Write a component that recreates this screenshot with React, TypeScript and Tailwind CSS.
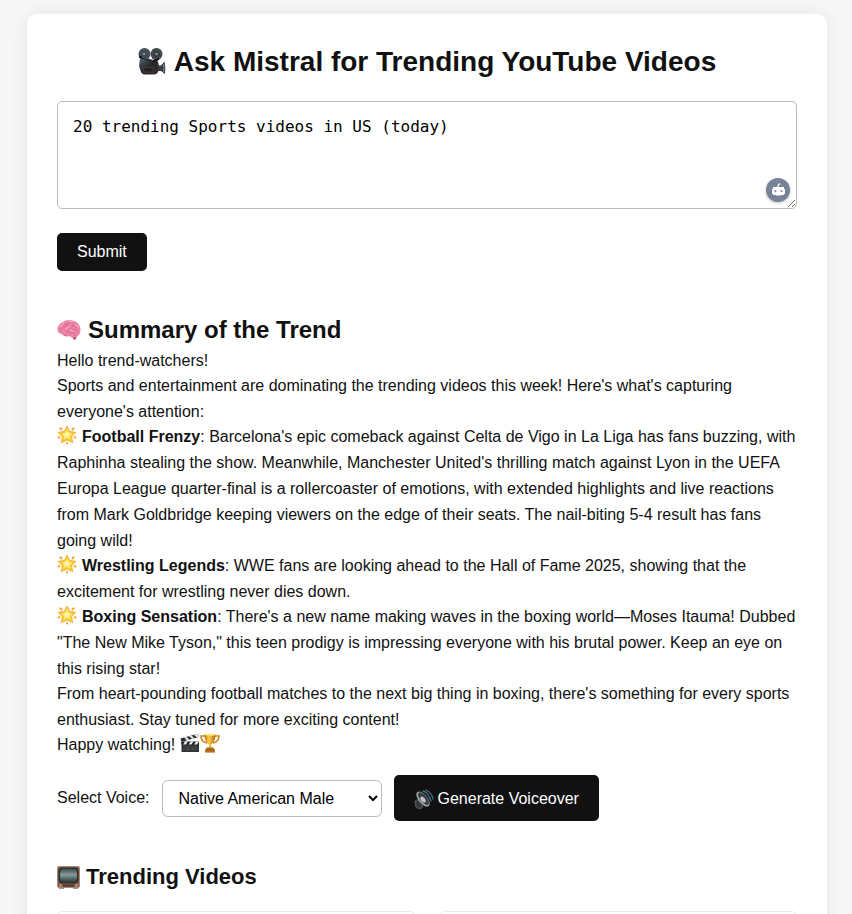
import { useState, type ReactNode } from "react";

function CameraIcon() {
  return (
    <svg viewBox="0 0 28 28" className="h-7 w-7 shrink-0" aria-hidden="true">
      <defs>
        <linearGradient id="camBody" x1="0" y1="0" x2="1" y2="1">
          <stop offset="0" stopColor="#566773" />
          <stop offset="0.5" stopColor="#25292d" />
          <stop offset="1" stopColor="#3d2d2b" />
        </linearGradient>
      </defs>
      <path d="M2 10Q6 12 10 12H19Q21 15 21 19L20 24Q19 26.500 16 26.500H7Q4 26.500 3 24L1 18Z" fill="url(#camBody)" />
      <path d="M20 17.500H23L26.500 13.500Q28 20 27 26L23 23H20Z" fill="#343b40" />
      <path d="M25.500 16Q26.500 20 25.500 24" stroke="#849098" fill="none" />
      <circle cx="6.500" cy="6" r="6" fill="#3f4a52" />
      <circle cx="18.500" cy="6" r="6" fill="#363d43" />
      <circle cx="6.500" cy="6" r="4.500" fill="none" stroke="#53616b" strokeWidth="0.8" />
      <circle cx="18.500" cy="6" r="4.500" fill="none" stroke="#53616b" strokeWidth="0.8" />
      <circle cx="6" cy="6" r="1.300" fill="#87939a" />
      <circle cx="18.500" cy="6" r="1.300" fill="#87939a" />
      <path d="M1 8.500L15 13L21 11" stroke="#111518" strokeWidth="2" fill="none" />
      <path d="M4 9L15 12.500" stroke="#87939a" strokeWidth="0.7" />
      <path d="M5 19.500H15V24H6Z" fill="#222" stroke="#5c463f" strokeWidth="0.6" />
    </svg>
  );
}

function BrainIcon() {
  return (
    <svg viewBox="0 0 24 24" className="h-6 w-6 shrink-0" aria-hidden="true">
      <path d="M14 17Q16 21.500 18.500 22L20 18Z" fill="#b95776" />
      <path d="M.5 12C0 8 3 5 6 4C9 1.500 14 1.500 17 3C21 4 23.500 8 23.500 12C23.500 16 21 19 18 19C16 20 13 19 12 18C9 19 6 18 5 16C3 16 1 14.500 .5 12Z" fill="#ee83a8" />
      <path d="M3 12Q4 9 7 10Q8 6 11 7Q10 4 13 4M5 6Q9 4 9 8M14 3Q18 5 15 8Q18 7 20 10M11 11Q14 8 16 12Q19 10 21 14M4 14Q7 11 9 14Q12 12 13 15Q16 14 19 17M10 18Q7 16 6 15" fill="none" stroke="#cc5f88" strokeWidth="0.8" strokeLinecap="round" />
      <path d="M3 9Q4 6 7 5M11 3Q14 2.500 16 4M18 7L21 9M9 11L12 9M14 12L16 13M6 13L8 14" fill="none" stroke="#ffbccf" strokeWidth="1" strokeLinecap="round" />
    </svg>
  );
}

function StarIcon() {
  return (
    <svg viewBox="0 0 20 20" className="mr-[5px] inline-block h-5 w-5 align-text-bottom" aria-hidden="true">
      <path d="M3.300 3.300L4.500 4.500M16.700 3.300L15.500 4.500M1.500 12.500L2.500 12.200M18.500 12.500L17.500 12.200M10 18V18.600" stroke="#f0a63a" strokeWidth="2" strokeLinecap="round" />
      <path d="M10 1L12.700 6.500L19 7.300L14.600 11.700L15.800 17.800L10 15L4.200 17.800L5.400 11.700L1 7.300L7.300 6.500Z" fill="#fdc62f" stroke="#f2ab2e" strokeWidth="0.8" strokeLinejoin="round" />
      <path d="M10 3.500L12 8L16 8.500L13 11.300L13.800 15L10 13L6.200 15L7 11.300L4 8.500L8 8Z" fill="#ffe56b" />
      <circle cx="10" cy="9.500" r="2.500" fill="#fff5a8" />
    </svg>
  );
}

function ClapperIcon() {
  return (
    <svg viewBox="0 0 20 20" className="inline-block h-5 w-5 align-text-bottom" aria-hidden="true">
      <path d="M.5 5.500L18 .8L19 4L1.500 8.700Z" fill="#292b2d" />
      <path d="M4 4.600L7 7.200L9.500 6.500L6.500 3.900ZM9 3.200L12 5.800L14.500 5.200L11.500 2.600ZM14 1.900L17 4.500L19 4L18 .8Z" fill="#e8e9e8" />
      <path d="M1.500 9H19V19H1.500Z" fill="#303234" />
      <path d="M1.500 8.500H19V11.500H1.500Z" fill="#191b1c" />
      <path d="M5 8.500L3 11.500H6L8 8.500ZM10.500 8.500L8.500 11.500H11.500L13.500 8.500ZM16 8.500L14 11.500H17L19 8.500Z" fill="#e8e9e8" />
      <path d="M3 14H17.500M3 16.500H17.500M8 14V18M13 14V18" stroke="#5b5e60" strokeWidth="0.6" />
    </svg>
  );
}

function TrophyIcon() {
  return (
    <svg viewBox="0 0 20 20" className="inline-block h-5 w-5 align-text-bottom" aria-hidden="true">
      <defs>
        <linearGradient id="gold">
          <stop stopColor="#b9690d" />
          <stop offset="0.4" stopColor="#ffd04a" />
          <stop offset="1" stopColor="#b7640c" />
        </linearGradient>
      </defs>
      <path d="M5 3H1Q1 9 7 10M15 3H19Q19 9 13 10" fill="none" stroke="#c98319" strokeWidth="1.500" />
      <path d="M4.500 1.500H15.500Q15.500 9 11 11.500V15H9V11.500Q4.500 9 4.500 1.500Z" fill="url(#gold)" />
      <ellipse cx="10" cy="1.800" rx="5.500" ry="1" fill="#ffe278" />
      <path d="M7 14.500H13L15 17V19.500H5V17Z" fill="#a35a12" />
      <path d="M7 15H13M5 18H15" stroke="#d58e25" strokeWidth="0.8" />
    </svg>
  );
}

function SpeakerIcon() {
  return (
    <svg viewBox="0 0 20 20" className="h-5 w-5 shrink-0" aria-hidden="true">
      <path d="M1 14Q0 11 4 11L9 14L8 19Q4 21 2 18Z" fill="#34383a" stroke="#6c7476" strokeWidth="0.7" />
      <ellipse cx="9" cy="10" rx="4.500" ry="9" transform="rotate(-39 9 10)" fill="#9ba3a6" />
      <ellipse cx="9.500" cy="9.600" rx="3.300" ry="7.600" transform="rotate(-39 9.500 9.600)" fill="#353c40" />
      <ellipse cx="9" cy="10.500" rx="2" ry="3.500" transform="rotate(-39 9 10.500)" fill="#bdc3c6" />
      <path d="M9 2Q14 3 17 12M12 1Q18 4 19 10" fill="none" stroke="#447582" strokeWidth="1.300" strokeLinecap="round" />
    </svg>
  );
}

function TvIcon() {
  return (
    <svg viewBox="0 0 23 23" className="h-[23px] w-[23px] shrink-0" aria-hidden="true">
      <defs>
        <linearGradient id="screen" x2="0" y2="1">
          <stop stopColor="#35494a" />
          <stop offset="0.45" stopColor="#849c99" />
          <stop offset="1" stopColor="#243536" />
        </linearGradient>
      </defs>
      <path d="M2 21H7V22.500H2ZM16 21H21V22.500H16Z" fill="#4b2d24" />
      <rect x="0.500" y="0.500" width="22" height="21" rx="1.500" fill="#86604f" stroke="#a78673" />
      <rect x="1.500" y="1.500" width="20" height="16" rx="4" fill="#342e2b" />
      <path d="M5 3Q11.500 1.800 18 3Q20 3.500 20 9.500Q20 15.500 18 16Q11.500 17.200 5 16Q3 15.500 3 9.500Q3 3.500 5 3Z" fill="url(#screen)" />
      <rect x="6" y="18.500" width="11" height="2" fill="#51372e" />
      <circle cx="3.500" cy="19.500" r="1" fill="#d1af98" />
      <circle cx="19.500" cy="19.500" r="1" fill="#d1af98" />
    </svg>
  );
}

function RobotIcon() {
  return (
    <svg viewBox="0 0 24 24" className="h-6 w-6" aria-hidden="true">
      <path d="M12 9V7.500L14 5.500" fill="none" stroke="white" strokeWidth="1.200" />
      <path d="M7 9H18V11H19V16H18V17H7V16H6V11H7Z" fill="white" />
      <path d="M10 17.500H15V18H10Z" fill="white" />
      <circle cx="9.500" cy="13" r="1" fill="#788397" />
      <circle cx="15.500" cy="13" r="1" fill="#788397" />
    </svg>
  );
}

function Highlight({ title, children }: { title: string; children: ReactNode }) {
  return (
    <p>
      <StarIcon />
      <strong>{title}</strong>: {children}
    </p>
  );
}

export default function App() {
  const [prompt, setPrompt] = useState("20 trending Sports videos in US (today)");

  return (
    <div className="h-screen overflow-hidden bg-[#f7f7f7] pt-3.5 pl-0.5 font-['Helvetica_Neue','Liberation_Sans',Arial,sans-serif] text-base text-[#111]">
      <main className="mx-auto max-w-[800px] rounded-[10px] bg-white p-[30px] shadow-[0_0_20px_rgba(0,0,0,0.08)]">
        <h1 className="flex items-center justify-center gap-2 text-[28px] leading-9 font-bold">
          <CameraIcon />
          Ask Mistral for Trending YouTube Videos
        </h1>

        <form onSubmit={(event) => event.preventDefault()}>
          <div className="relative mt-[21px]">
            <textarea
              aria-label="Video prompt"
              value={prompt}
              onChange={(event) => setPrompt(event.target.value)}
              className="block h-[108px] w-full resize-y rounded-[5px] border border-[#bbb] bg-white px-[15px] py-[15px] font-['DejaVu_Sans_Mono',monospace] text-base leading-5 text-black outline-none"
            />
            <button
              type="button"
              aria-label="Open assistant"
              className="absolute right-[7px] bottom-[7px] h-6 w-6 rounded-full bg-[#788397] shadow-[0_1px_3px_rgba(0,0,0,0.25)]"
            >
              <RobotIcon />
            </button>
          </div>
          <button type="submit" className="mt-6 block rounded-[5px] bg-[#111] px-5 py-[7px] leading-6 text-white">
            Submit
          </button>
        </form>

        <section className="mt-[41px]">
          <h2 className="flex items-center gap-[7px] text-2xl leading-9 font-bold">
            <BrainIcon />
            Summary of the Trend
          </h2>
          <div className="-space-y-px leading-[26px]">
            <p>Hello trend-watchers!</p>
            <p>
              Sports and entertainment are dominating the trending videos this week! Here's what's capturing everyone's
              attention:
            </p>
            <Highlight title="Football Frenzy">
              Barcelona's epic comeback against Celta de Vigo in La Liga has fans buzzing, with Raphinha stealing the
              show. Meanwhile, Manchester United's thrilling match against Lyon in the UEFA Europa League quarter-final
              is a rollercoaster of emotions, with extended highlights and live reactions from Mark Goldbridge keeping
              viewers on the edge of their seats. The nail-biting 5-4 result has fans going wild!
            </Highlight>
            <Highlight title="Wrestling Legends">
              WWE fans are looking ahead to the Hall of Fame 2025, showing that the excitement for wrestling never dies
              down.
            </Highlight>
            <Highlight title="Boxing Sensation">
              There's a new name making waves in the boxing world—Moses Itauma! Dubbed "The New Mike Tyson," this teen
              prodigy is impressing everyone with his brutal power. Keep an eye on this rising star!
            </Highlight>
            <p>
              From heart-pounding football matches to the next big thing in boxing, there's something for every sports
              enthusiast. Stay tuned for more exciting content!
            </p>
            <p>
              Happy watching! <ClapperIcon />
              <TrophyIcon />
            </p>
          </div>
        </section>

        <div className="mt-[17px] flex flex-wrap items-center gap-3">
          <label htmlFor="voice">Select Voice:</label>
          <select
            id="voice"
            defaultValue="male"
            className="h-[37px] w-[220px] rounded-md border border-[#bbb] bg-white px-3 text-base text-black"
          >
            <option value="male">Native American Male</option>
            <option value="female">Native American Female</option>
          </select>
          <button type="button" className="flex items-center gap-1 rounded-[5px] bg-[#111] px-5 pt-3 pb-2.5 leading-6 text-white">
            <SpeakerIcon />
            Generate Voiceover
          </button>
        </div>

        <section className="mt-10">
          <h2 className="flex items-center gap-1.5 text-[22px] leading-8 font-bold">
            <TvIcon />
            Trending Videos
          </h2>
          <div className="mt-[18px] grid grid-cols-2 gap-6">
            <article className="h-64 rounded-md border border-[#e8e8e8] bg-white" />
            <article className="h-64 rounded-md border border-[#e8e8e8] bg-white" />
          </div>
        </section>
      </main>
    </div>
  );
}
